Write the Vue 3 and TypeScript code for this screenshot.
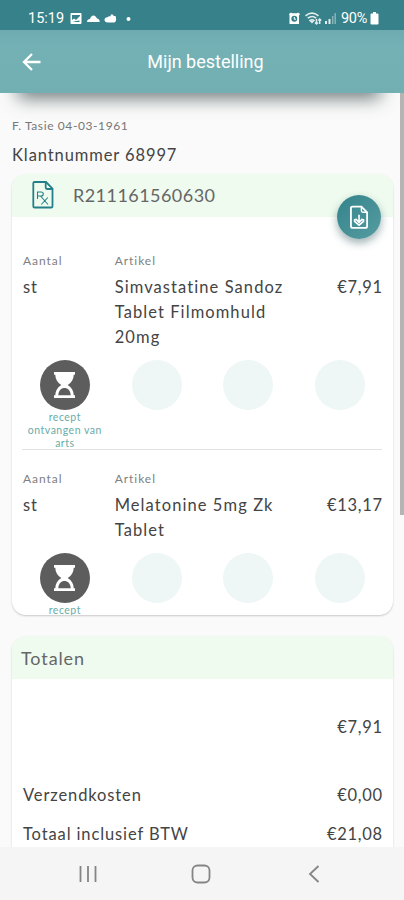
<script setup lang="ts">
interface OrderLine {
  amount: string
  article: string
  price: string
  status: string
}

const lines: OrderLine[] = [
  { amount: 'st', article: 'Simvastatine Sandoz Tablet Filmomhuld 20mg', price: '€7,91', status: 'recept ontvangen van arts' },
  { amount: 'st', article: 'Melatonine 5mg Zk Tablet', price: '€13,17', status: 'recept' },
]
</script>

<template>
  <div class="screen">
    <div class="status">
      <span class="clock">15:19</span>
      <svg class="left-icons" width="64" height="14" viewBox="0 0 64 14" fill="#fff">
        <path fill-rule="evenodd" d="M1.500 1h9a1 1 0 0 1 1 1v9a1 1 0 0 1-1 1h-9a1 1 0 0 1-1-1V2a1 1 0 0 1 1-1zM2 3v5l2-1.500 2 1.500 4-4V3zM2.500 10h7V8.500L6 9z" />
        <path d="M17 10c0-2 1.300-3 3-3 .6-2.300 2-3.500 3.500-3.500S26.400 5 27 6.500c1.600 0 2.700 1.500 2.700 3.500z" />
        <path d="M38 10.500c-2.500 0-3.500-1.200-3.500-2.800S36 5 37.500 5.200C38.500 4 39.500 4 40.500 4.500c0-1.500 1-2.500 2-2 .5 1 1.500 1.700 3 1.500 1 2.500 1 6.500-1.500 6.500z" />
        <circle cx="58.500" cy="7" r="2" />
      </svg>
      <svg class="right-icons" width="50" height="15" viewBox="0 0 50 15" fill="none" stroke="#fff">
        <path fill="#fff" stroke="none" fill-rule="evenodd" d="M1 3l2-1.500 1 .8h5l1-.8L12 3l-1 1.500V13H1.500V4.500zM6.300 4.800a3 3 0 1 0 0 6 3 3 0 0 0 0-6z" />
        <path d="M6.300 6v2.200H8" stroke-width="1" />
        <g stroke-width="1.500" opacity=".85">
          <path d="M17.500 4.800c4-3.300 9-3.300 13 0M19.700 7.200c3-2.300 6-2.300 8.600 0M22 9.400c1.500-1 2.800-1 4 0l-2 2z" />
          <path d="M28.500 8v5M27 11.500l1.500 1.500L30 11.500M31.700 13V8M30.300 9.500L31.700 8l1.500 1.500" />
        </g>
        <path d="M38 10v3M41.500 8v5" stroke-width="2" opacity=".85" />
        <path d="M44.700 5v8M47.200 2v11" stroke-width="1.500" opacity=".4" />
      </svg>
      <span class="battery">90%</span>
      <svg width="9" height="13" viewBox="0 0 9 13" fill="#fff"><path d="M3 0h3v1.500h1.500q1 0 1 1v9q0 1-1 1h-6q-1 0-1-1v-9q0-1 1-1H3z" /></svg>
    </div>

    <header class="appbar">
      <svg class="back" width="20" height="20" viewBox="0 0 20 20" fill="none" stroke="#fff" stroke-width="2.300">
        <path d="M18.500 10H2.500M10 2L2 10l8 8" />
      </svg>
      <h1>Mijn bestelling</h1>
    </header>

    <main class="content">
      <div class="scrollbar"></div>
      <p class="patient">F. Tasie 04-03-1961</p>
      <p class="customer">Klantnummer 68997</p>

      <section class="card order">
        <div class="card-head">
          <svg class="rx" width="22" height="28" viewBox="0 0 22 28" fill="none" stroke="#23808a">
            <path stroke-width="1.800" d="M2.600 1H14l6.500 6.500v17.700q0 1.300-1.300 1.300H2.600Q1.300 26.500 1.300 25.200V2.300Q1.300 1 2.600 1z" />
            <path stroke-width="1.800" d="M13.700 1.500v5q0 1.500 1.500 1.500h5" />
            <path stroke-width="1.100" d="M5.500 18v-7h3.500q2.300 0 2.300 2T9 15H5.500M8.500 15l7.500 8.500M15.800 16.500L9.300 23.500" />
          </svg>
          <span>R211161560630</span>
        </div>
        <button class="download" aria-label="Download">
          <svg width="19" height="25" viewBox="0 0 20 25" fill="none" stroke="#fff" stroke-width="1.900">
            <path d="M2.800 1H12l6 6v14.700q0 1.800-1.800 1.800H2.800Q1 23.500 1 21.700V2.800Q1 1 2.800 1z" />
            <path stroke-width="1.500" d="M12 1.500V5.500q0 1.500 1.500 1.500h4" />
            <path stroke-width="1.700" d="M9.500 9.500v7M4.800 15l1.700-.5 3 3 3-3 1.700.5v1.500l-4.700 4-4.700-4z" />
          </svg>
        </button>
        <article v-for="line in lines" :key="line.article" class="line">
          <div class="grid labels"><span>Aantal</span><span>Artikel</span></div>
          <div class="grid values">
            <span>{{ line.amount }}</span>
            <span class="name">{{ line.article }}</span>
            <span class="price">{{ line.price }}</span>
          </div>
          <div class="grid steps">
            <div class="step">
              <div class="dot active">
                <svg width="23" height="28" viewBox="0 0 23 28">
                  <path fill="#fff" d="M1 1h21v2.800h-1.300c0 4.200-2 7.700-6 10.200 4 2.500 6 6 6 10.200H22V27H1v-2.800h1.300c0-4.200 2-7.700 6-10.200-4-2.500-6-6-6-10.200H1z" />
                  <path fill="#5d5d5d" d="M5.300 24.200c.3-4.700 3-7.200 6.200-7.200s5.900 2.500 6.200 7.200z" />
                </svg>
              </div>
              <span class="caption">{{ line.status }}</span>
            </div>
            <div v-for="n in 3" :key="n" class="step"><div class="dot"></div></div>
          </div>
        </article>
      </section>

      <section class="card totals">
        <div class="card-head">Totalen</div>
        <div class="row subtotal"><span></span><span>€7,91</span></div>
        <div class="row"><span>Verzendkosten</span><span>€0,00</span></div>
        <div class="row"><span>Totaal inclusief BTW</span><span>€21,08</span></div>
      </section>
    </main>

    <nav class="navbar">
      <svg width="18" height="18" viewBox="0 0 18 18" stroke="#858585" stroke-width="1.800"><path d="M1.500 1v16M9 1v16M16.500 1v16" /></svg>
      <svg class="home" width="20" height="20" viewBox="0 0 20 20" fill="none" stroke="#858585" stroke-width="1.800"><rect x="1.500" y="1.500" width="17" height="17" rx="5" /></svg>
      <svg width="12" height="18" viewBox="0 0 12 18" fill="none" stroke="#858585" stroke-width="1.800"><path d="M10.500 1L2 9l8.500 8" /></svg>
    </nav>
  </div>
</template>

<style>
body {
  background: #fafafa;
}
</style>

<style scoped>
.screen {
  width: 404px;
  height: 900px;
  display: flex;
  flex-direction: column;
  overflow: hidden;
  background: #fafafa;
  color: #444;
  font-family: Lato, "Open Sans", sans-serif;
}
.screen * {
  box-sizing: border-box;
}
.status {
  flex: none;
  height: 30px;
  padding: 7px 25px 0 28px;
  display: flex;
  align-items: center;
  background: #37818a;
  color: #fff;
  font: 14.500px/20px Roboto, sans-serif;
}
.clock {
  width: 36px;
}
.left-icons {
  margin-left: 6px;
}
.right-icons {
  margin-left: auto;
  margin-right: 3px;
}
.battery {
  width: 28px;
  font-size: 14.500px;
  letter-spacing: -0.300px;
  margin-right: 1px;
}
.appbar {
  flex: none;
  height: 63px;
  display: flex;
  align-items: center;
  padding: 0 22px;
  background: linear-gradient(#6eabb0, #74b1b5 25%, #72afb3);
  color: #fff;
}
.appbar h1 {
  flex: 1;
  margin: 0 13px 0 0;
  text-align: center;
  font: 400 18px/24px Roboto, sans-serif;
}
.content {
  position: relative;
  flex: 1;
  min-height: 0;
  overflow: hidden;
  padding: 23px 11px 0 12px;
}
.content::before {
  content: "";
  position: absolute;
  top: -16px;
  left: 22px;
  right: 28px;
  height: 14px;
  box-shadow: 0 3px 18px 4px rgba(60, 75, 75, 0.750);
}
.scrollbar {
  position: absolute;
  top: 0;
  right: 0;
  width: 4px;
  height: 422px;
  background: #b4b4b4;
}
p {
  margin: 0;
}
.patient {
  font-size: 12px;
  line-height: 20px;
  letter-spacing: 0.600px;
  color: #777;
}
.customer {
  margin-top: 8px;
  font-size: 16.500px;
  line-height: 22px;
  letter-spacing: 0.900px;
}
.card {
  position: relative;
  background: #fff;
  border-radius: 14px;
  box-shadow: 0 1px 2px rgba(0, 0, 0, 0.200);
}
.order {
  margin-top: 8px;
  height: 441px;
  overflow: hidden;
}
.card-head {
  height: 43px;
  display: flex;
  align-items: center;
  background: #effbef;
  color: #666;
  font-size: 18px;
  letter-spacing: 0.900px;
}
.order .card-head {
  padding: 0 0 2px 20px;
  gap: 19px;
  letter-spacing: 0.450px;
}
.download {
  position: absolute;
  left: 325px;
  top: 21px;
  width: 44px;
  height: 44px;
  padding: 0;
  border: 0;
  border-radius: 50%;
  display: grid;
  place-items: center;
  background: linear-gradient(135deg, #33848b, #569ca1);
  box-shadow: 0 4px 8px rgba(40, 80, 85, 0.450);
}
.line {
  margin: 0 11px 0 10px;
  padding-top: 20px;
}
.order .card-head + .download + .line {
  height: 233px;
  padding-top: 35px;
  border-bottom: 1px solid #e2e2e2;
}
.grid {
  display: grid;
  grid-template-columns: repeat(4, 91.700px);
}
.labels {
  padding-left: 1px;
  font-size: 12px;
  line-height: 18px;
  letter-spacing: 0.950px;
  color: #808080;
}
.values {
  margin-top: 5px;
  padding-left: 1px;
  grid-template-columns: 91.700px 183px 1fr;
  font-size: 16.500px;
  line-height: 25px;
  letter-spacing: 0.800px;
}
.name {
  letter-spacing: 1.080px;
}
.price {
  text-align: right;
  letter-spacing: 0.700px;
  margin-right: -0.700px;
}
.steps {
  margin-left: -3px;
  margin-top: 10px;
}
.step {
  display: flex;
  flex-direction: column;
  align-items: center;
}
.dot {
  width: 50px;
  height: 50px;
  border-radius: 50%;
  display: grid;
  place-items: center;
  background: #eef6f6;
}
.dot.active {
  background: #5d5d5d;
}
.caption {
  width: 84px;
  margin-top: 1px;
  text-align: center;
  font-size: 10.500px;
  line-height: 13px;
  letter-spacing: 0.500px;
  color: #69aba8;
}
.totals {
  margin-top: 21px;
  height: 300px;
  overflow: hidden;
}
.totals .card-head {
  padding-left: 9px;
}
.row {
  height: 39px;
  padding: 0 11px;
  display: flex;
  align-items: center;
  justify-content: space-between;
  font-size: 16.500px;
  letter-spacing: 0.880px;
}
.row span:last-child {
  letter-spacing: 0.700px;
  margin-right: -0.700px;
}
.subtotal {
  height: 96px;
}
.navbar {
  flex: none;
  height: 53px;
  padding: 0 84px 0 79px;
  display: flex;
  align-items: center;
  justify-content: space-between;
  background: #f5f5f5;
}
.home {
  margin-right: 4px;
}
</style>
